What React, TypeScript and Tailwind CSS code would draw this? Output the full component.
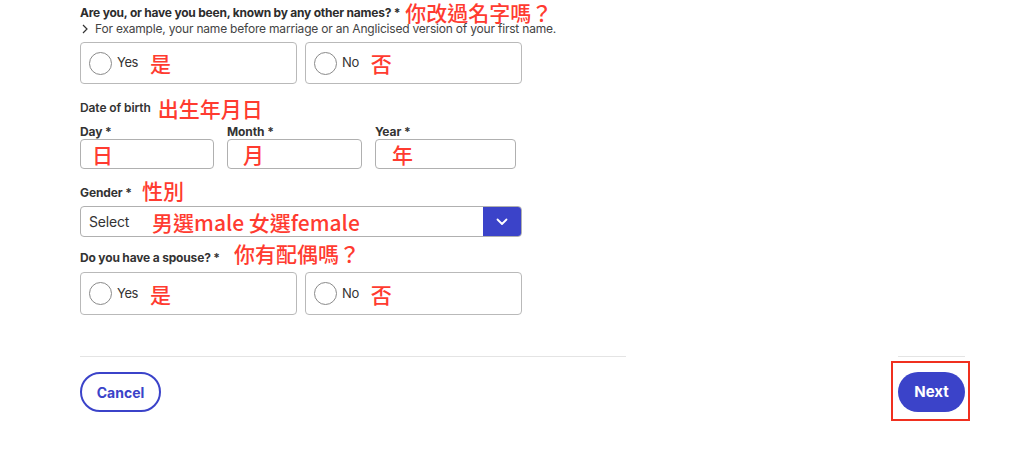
import React from "react";

const red = "text-[#ff3b30] font-medium text-[21px] leading-[22px] [font-family:'Noto_Sans_CJK_TC','Noto_Sans',sans-serif]";

function Radio({ label, note }: { label: string; note: string }) {
  return (
    <div className="w-[217px] h-full border border-[#b9b9b9] rounded-[4px] flex items-center pl-[8px]">
      <span className="w-[23px] h-[23px] rounded-full border border-[#8a8a8a] bg-white shrink-0" />
      <span className="ml-[5px] text-[13px] tracking-[-0.4px] text-[#333]">{label}</span>
      <span className={`${red} ml-[12px]`}>{note}</span>
    </div>
  );
}

function RadioRow() {
  return (
    <div className="flex gap-[8px] h-full">
      <Radio label="Yes" note="是" />
      <Radio label="No" note="否" />
    </div>
  );
}

function DateBox({ note, w, pl }: { note: string; w: string; pl: string }) {
  return (
    <div className={`${w} h-[30px] border border-[#b0b0b0] rounded-[4px] flex items-center ${pl}`}>
      <span className={red}>{note}</span>
    </div>
  );
}

export default function App() {
  return (
    <div className="w-[1023px] h-[458px] bg-white relative flex [font-family:Inter,'Liberation_Sans',sans-serif] text-[#2d2d2d]">
      <div className="ml-[80px] w-[546px] flex flex-col">
        <div className="mt-[1px] h-[21px] flex items-center">
          <span className="text-[12px] font-bold text-[#2d2d2d] tracking-[-0.22px] mt-[2px]">
            Are you, or have you been, known by any other names? *
          </span>
          <span className={`${red} ml-[5px]`}>你改過名字嗎？</span>
        </div>
        <div className="h-[14px] flex items-center text-[12px] text-[#444] tracking-[-0.2px]">
          <svg width="8" height="10" viewBox="0 0 8 10" className="ml-[1px] mr-[6px]">
            <path d="M2 1 L6 5 L2 9" fill="none" stroke="#333" strokeWidth="1.2" />
          </svg>
          <span>For example, your name before marriage or an Anglicised version of your first name.</span>
        </div>
        <div className="mt-[6px] h-[42px]">
          <RadioRow />
        </div>

        <div className="mt-[14px] h-[20px] flex items-center">
          <span className="text-[12px] font-semibold text-[#333] tracking-[-0.1px]">Date of birth</span>
          <span className={`${red} ml-[7px]`}>出生年月日</span>
        </div>
        <div className="mt-[5px] h-[14px] flex gap-[13px] text-[12px] font-bold text-[#333] tracking-[-0.1px]">
          <span className="w-[134px]">Day *</span>
          <span className="w-[135px]">Month *</span>
          <span className="w-[140px]">Year *</span>
        </div>
        <div className="mt-[2px] flex gap-[13px]">
          <DateBox note="日" w="w-[134px]" pl="pl-[11px]" />
          <DateBox note="月" w="w-[135px]" pl="pl-[15px]" />
          <DateBox note="年" w="w-[141px]" pl="pl-[16px]" />
        </div>

        <div className="mt-[12px] h-[20px] flex items-end">
          <span className="text-[12px] font-bold text-[#333] leading-[14px] mb-[1px] tracking-[-0.1px]">Gender *</span>
          <span className={`${red} ml-[10px]`}>性別</span>
        </div>
        <div className="mt-[5px] w-[442px] h-[31px] border border-[#b0b0b0] rounded-[4px] flex overflow-hidden">
          <div className="flex-1 flex items-center pl-[8px]">
            <span className="text-[14px] text-[#333] tracking-[-0.2px]">Select</span>
            <span className={`${red} ml-[23px]`}>男選male 女選female</span>
          </div>
          <div className="w-[38px] bg-[#3b43c9] flex items-center justify-center">
            <svg width="12" height="8" viewBox="0 0 12 8">
              <path d="M1.5 1.5 L6 6 L10.5 1.5" fill="none" stroke="white" strokeWidth="1.8" strokeLinecap="round" strokeLinejoin="round" />
            </svg>
          </div>
        </div>

        <div className="mt-[5px] h-[25px] flex items-start">
          <span className="text-[12px] font-bold text-[#333] leading-[14px] mt-[9px] tracking-[-0.17px]">Do you have a spouse? *</span>
          <span className={`${red} ml-[14px]`}>你有配偶嗎？</span>
        </div>
        <div className="mt-[5px] h-[43px]">
          <RadioRow />
        </div>

        <div className="mt-[41px] h-px bg-[#e4e4e4]" />
        <div className="mt-[15px]">
          <button className="w-[81px] h-[40px] rounded-full border-2 border-[#3b43c9] text-[#3b43c9] text-[14px] font-bold">
            Cancel
          </button>
        </div>
      </div>

      <div className="ml-[272px] w-[67px] flex flex-col">
        <div className="mt-[356px] h-px bg-[#e4e4e4]" />
        <button className="mt-[15px] w-[67px] h-[40px] rounded-full bg-[#3b43c9] text-white text-[15px] font-bold">
          Next
        </button>
      </div>

      <div className="absolute left-[891px] top-[361px] w-[79px] h-[60px] border-2 border-[#f0301f]" />
    </div>
  );
}
